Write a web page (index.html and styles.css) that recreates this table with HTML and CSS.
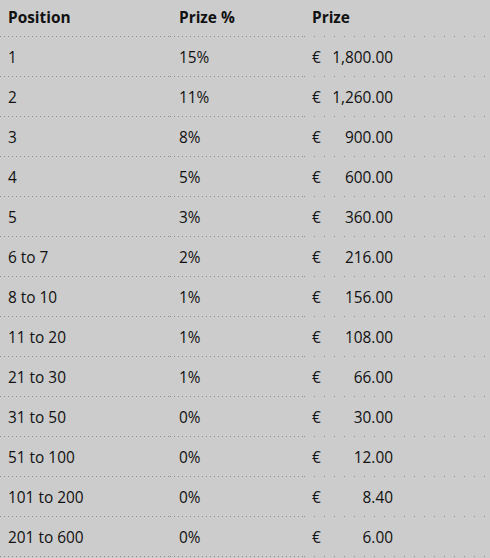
FILE: index.html
```html
<!DOCTYPE html>
<html>
<head>
<meta charset="utf-8">
<link rel="stylesheet" href="styles.css">
</head>
<body>
<div class="table">
  <div class="row head">
    <div class="cell c1">Position</div>
    <div class="cell c2">Prize %</div>
    <div class="cell c3">Prize</div>
  </div>
  <div class="row"><div class="cell c1">1</div><div class="cell c2">15%</div><div class="cell c3"><span class="cur">€</span><span class="amt">1,800.00</span></div></div>
  <div class="row"><div class="cell c1">2</div><div class="cell c2">11%</div><div class="cell c3"><span class="cur">€</span><span class="amt">1,260.00</span></div></div>
  <div class="row"><div class="cell c1">3</div><div class="cell c2">8%</div><div class="cell c3"><span class="cur">€</span><span class="amt">900.00</span></div></div>
  <div class="row"><div class="cell c1">4</div><div class="cell c2">5%</div><div class="cell c3"><span class="cur">€</span><span class="amt">600.00</span></div></div>
  <div class="row"><div class="cell c1">5</div><div class="cell c2">3%</div><div class="cell c3"><span class="cur">€</span><span class="amt">360.00</span></div></div>
  <div class="row"><div class="cell c1">6 to 7</div><div class="cell c2">2%</div><div class="cell c3"><span class="cur">€</span><span class="amt">216.00</span></div></div>
  <div class="row"><div class="cell c1">8 to 10</div><div class="cell c2">1%</div><div class="cell c3"><span class="cur">€</span><span class="amt">156.00</span></div></div>
  <div class="row"><div class="cell c1">11 to 20</div><div class="cell c2">1%</div><div class="cell c3"><span class="cur">€</span><span class="amt">108.00</span></div></div>
  <div class="row"><div class="cell c1">21 to 30</div><div class="cell c2">1%</div><div class="cell c3"><span class="cur">€</span><span class="amt">66.00</span></div></div>
  <div class="row"><div class="cell c1">31 to 50</div><div class="cell c2">0%</div><div class="cell c3"><span class="cur">€</span><span class="amt">30.00</span></div></div>
  <div class="row"><div class="cell c1">51 to 100</div><div class="cell c2">0%</div><div class="cell c3"><span class="cur">€</span><span class="amt">12.00</span></div></div>
  <div class="row"><div class="cell c1">101 to 200</div><div class="cell c2">0%</div><div class="cell c3"><span class="cur">€</span><span class="amt">8.40</span></div></div>
  <div class="row"><div class="cell c1">201 to 600</div><div class="cell c2">0%</div><div class="cell c3"><span class="cur">€</span><span class="amt">6.00</span></div></div>
</div>
</body>
</html>
```
FILE: styles.css
```css
html, body {
  margin: 0;
  padding: 0;
  background: #cccccc;
}
body {
  font-family: "Open Sans", "Liberation Sans", sans-serif;
  font-size: 15.4px;
  color: #111111;
  width: 490px;
  height: 558px;
  overflow: hidden;
}
.table {
  display: flex;
  flex-direction: column;
}
.row {
  display: grid;
  grid-template-columns: 170px 134px 186px;
  height: 40px;
}
.row.head {
  height: 37px;
  font-weight: 700;
}
.cell {
  display: flex;
  align-items: center;
  box-sizing: border-box;
  padding: 1px 0 0 8px;
  white-space: nowrap;
  background-repeat: no-repeat;
  background-position: left bottom;
  background-size: 100% 1px;
}
.head .cell {
  padding-top: 0;
  padding-bottom: 2px;
}
.c1, .c2 {
  background-image: repeating-linear-gradient(to right, #8c8c8c 0 1px, transparent 1px 4px);
}
.c2 {
  padding-left: 9px;
}
.c3 {
  background-image: repeating-linear-gradient(to right, #8c8c8c 0 1px, transparent 1px 10px);
}
.cur {
  display: inline-block;
  width: 9px;
}
.amt {
  display: inline-block;
  width: 72px;
  text-align: right;
}
```
